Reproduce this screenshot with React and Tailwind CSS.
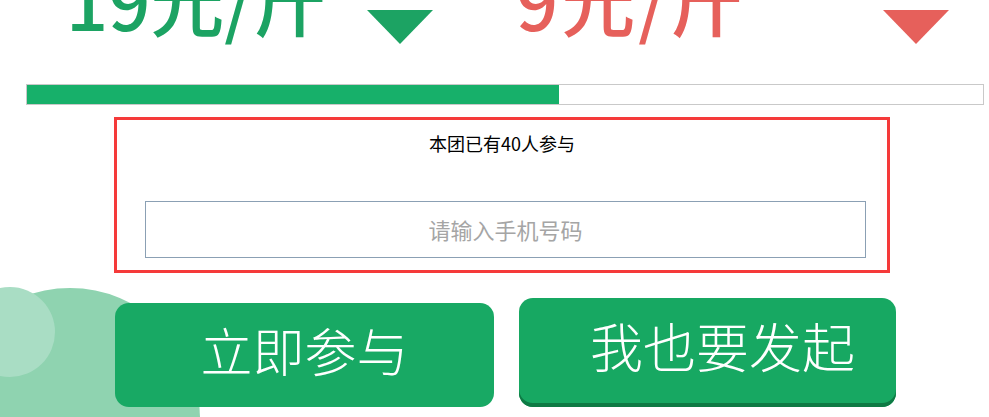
import React from "react";

const font = { fontFamily: '"Noto Sans CJK SC", "Noto Sans", sans-serif' };

function Tri({ color }) {
  return (
    <svg width="66" height="34" viewBox="0 0 66 34" className="block">
      <polygon points="0,0 66,0 33,34" fill={color} />
    </svg>
  );
}

export default function App() {
  return (
    <div
      className="relative w-[989px] h-[417px] overflow-hidden bg-white"
      style={font}
    >
      {/* decorative circles */}
      <div className="absolute left-[-60px] top-[288px] w-[260px] h-[260px] rounded-full bg-[#8fd3b0]" />
      <div className="absolute left-[-35px] top-[287px] w-[90px] h-[90px] rounded-full bg-[#a9ddc4]" />

      {/* price row */}
      <div className="relative flex h-[84px] overflow-hidden">
        <div className="flex w-[494px] items-start">
          <span className="ml-[66px] mt-[-38px] text-[74px] font-medium leading-none text-[#1ca363] whitespace-nowrap">
            19元/斤
          </span>
          <div className="ml-auto mr-[61px] mt-[10px]">
            <Tri color="#1ca363" />
          </div>
        </div>
        <div className="flex w-[495px] items-start">
          <span className="ml-[22px] mt-[-38px] text-[74px] font-medium leading-none tracking-[3px] text-[#e6605b] whitespace-nowrap">
            9元/斤
          </span>
          <div className="ml-auto mr-[40px] mt-[10px]">
            <Tri color="#e6605b" />
          </div>
        </div>
      </div>

      {/* progress */}
      <div className="relative ml-[26px] h-[21px] w-[958px] border border-[#c9c9c9] bg-white">
        <div className="h-full w-[532px] bg-[#17b06a]" />
      </div>

      {/* form box */}
      <div className="relative ml-[114px] mt-[12px] h-[156px] w-[776px] border-[3px] border-[#f53a3a] bg-white">
        <div className="mt-[10px] text-center text-[18px] leading-[27px] text-black">
          本团已有40人参与
        </div>
        <div className="ml-[28px] mt-[44px] flex h-[57px] w-[721px] items-center justify-center border border-[#8ba0b4] text-[22px] text-[#a5a5a5]">
          请输入手机号码
        </div>
      </div>

      {/* buttons */}
      <div className="relative ml-[115px] mt-[25px] flex items-end gap-[25px]">
        <div className="flex h-[104px] w-[379px] items-center justify-center rounded-[14px] bg-[#18a964] pb-[10px] text-[52px] font-light leading-none text-white">
          立即参与
        </div>
        <div className="flex h-[109px] w-[377px] items-center justify-center rounded-[14px] bg-[#17a862] pl-[30px] pb-[14px] text-[53px] font-light leading-none text-white shadow-[inset_0_-4px_0_#0e7a44]">
          我也要发起
        </div>
      </div>
    </div>
  );
}
